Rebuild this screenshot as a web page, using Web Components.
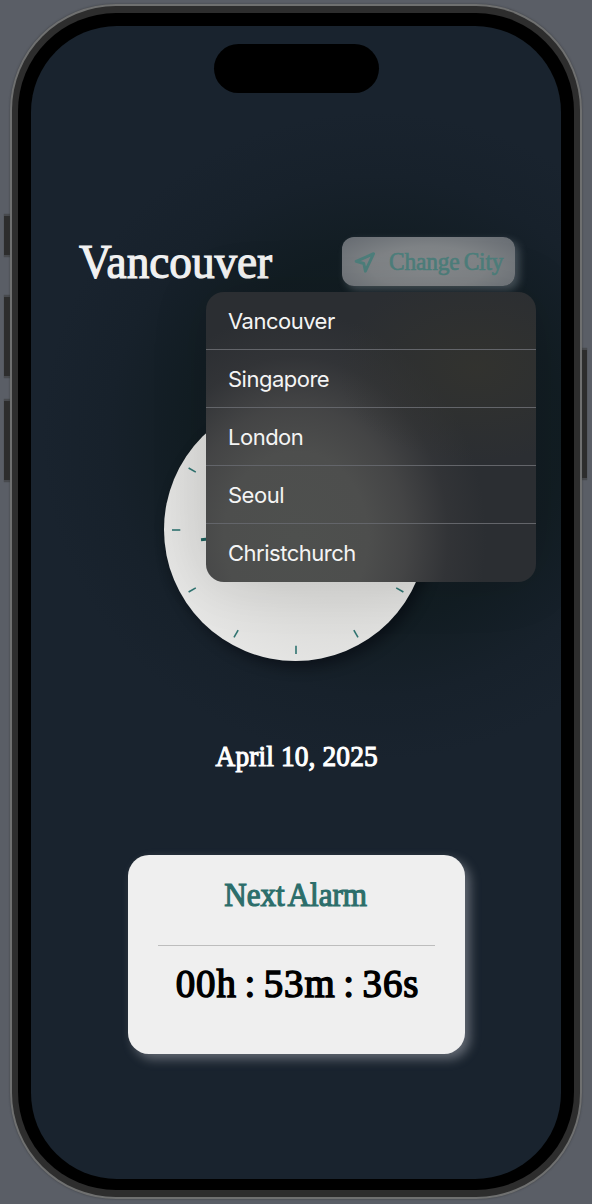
<!DOCTYPE html>
<html lang="en">
<head>
<meta charset="utf-8">
<title>World clock</title>
<style>
  html, body { margin: 0; height: 100%; overflow: hidden; background: #5a5e66; }
</style>
</head>
<body>
<phone-frame>
  <city-header slot="screen" city="Vancouver"></city-header>
  <clock-face slot="screen"></clock-face>
  <date-label slot="screen">April 10, 2025</date-label>
  <alarm-card slot="screen" heading="Next Alarm">00h : 53m : 36s</alarm-card>
</phone-frame>

<script>
const define = (name, html, setup) => customElements.define(name, class extends HTMLElement {
  constructor() {
    super();
    this.attachShadow({ mode: 'open' }).innerHTML = html;
  }
  connectedCallback() { if (setup) setup(this, this.shadowRoot); }
});

define('city-menu', `
<style>
  :host { display: block; box-sizing: border-box; width: 330px; height: 290px; border-radius: 18px; overflow: hidden;
    font: 400 22px/59px Inter, "Liberation Sans", sans-serif; letter-spacing: -.5px; color: #f4f4f4;
    background:
      radial-gradient(ellipse 140px 95px at 270px 75px, rgba(51,51,46,.85), rgba(51,51,46,0)),
      radial-gradient(ellipse 190px 225px at 90px 245px, #4e504e 0, #4d4e4d 38%, rgba(74,74,74,.8) 58%, rgba(60,60,62,.4) 80%, rgba(45,47,51,0) 100%),
      #2b2e32;
    box-shadow: 0 0 60px rgba(0,0,0,.1); }
  ::slotted(*) { display: block; height: 57px; padding-left: 22px; border-bottom: 1px solid #63656a; }
  ::slotted(:last-child) { border-bottom: 0; }
</style><slot></slot>`);

define('change-button', `
<style>
  :host { display: flex; align-items: center; box-sizing: border-box; width: 173px; height: 49px; padding-left: 12px; gap: 12px;
    border-radius: 12px; color: #4d7e7b;
    background: radial-gradient(ellipse 115px 42px at 50% 62%, #86898c 0, #7f8386 50%, #686d73 100%);
    box-shadow: 4px 4px 9px rgba(190,200,210,.3); }
  svg { display: block; flex: none; }
  span { font: 25.5px/49px "Liberation Serif", serif; letter-spacing: -.15px; word-spacing: -1.8px; white-space: nowrap; -webkit-text-stroke: .7px;
    transform: scaleX(.917); transform-origin: 0 50%; }
</style>
<svg width="23" height="24" viewBox="0 0 23 24" fill="none" stroke="currentColor" stroke-width="2.9" stroke-linejoin="round"><path d="M19.6 3.7 2.2 11.4 9.8 13.5 11.4 21.2Z"/></svg>
<span><slot></slot></span>`);

define('city-header', `
<style>
  :host { display: flex; justify-content: space-between; align-items: center; position: relative; z-index: 3; height: 49px; margin: 211px 46px 0 48px; }
  h1 { margin: 0; font: 400 48px/49px "Liberation Serif", serif; letter-spacing: -.05px; color: #f1f1f1; -webkit-text-stroke: 1.2px;
    transform: scaleX(.943); transform-origin: 0 50%; white-space: nowrap; }
  city-menu { position: absolute; top: 54.5px; right: -21px; }
</style>
<h1></h1>
<change-button>Change City</change-button>
<city-menu><span>Vancouver</span><span>Singapore</span><span>London</span><span>Seoul</span><span>Christchurch</span></city-menu>`,
(el, root) => { root.querySelector('h1').textContent = el.getAttribute('city'); });

define('clock-face', `
<style>
  :host { display: block; width: 263px; height: 263px; margin: 112px auto 0; border-radius: 50%; position: relative; left: -.5px;
    background: radial-gradient(circle at 66% 30%, #d6d6d4 0, #d9d9d7 48%, #ebebea 92%);
    box-shadow: 5px 6px 14px rgba(0,0,8,.45); }
  svg { display: block; }
</style>
<svg width="263" height="263" viewBox="-132 -132 263 263"><g class="ticks" stroke="#2f7370" stroke-width="1.6"></g><path d="M0 0-95 9.7" stroke="#1d5f5b" stroke-width="3"/></svg>`,
(el, root) => {
  root.querySelector('.ticks').innerHTML = Array.from({ length: 12 }, (_, i) =>
    `<path d="M0-115.7V-124" transform="rotate(${i * 30})"/>`).join('');
});

define('date-label', `
<style>
  :host { display: block; margin-top: 74.5px; text-align: center; color: #fff;
    font: 29px/40px "Liberation Serif", serif; letter-spacing: .15px; -webkit-text-stroke: 1.1px; transform: translateX(.7px) scaleX(.943); }
</style><slot></slot>`);

define('alarm-card', `
<style>
  :host { display: flex; flex-direction: column; align-items: center; box-sizing: border-box; width: 337px; height: 199px;
    margin: 79px auto 0; padding-top: 20px; border-radius: 21px; background: #efefef; font-family: "Liberation Serif", serif;
    box-shadow: 5px 5px 11px rgba(220,220,230,.38); }
  h2 { margin: 0; font: 400 33px/40px "Liberation Serif", serif; letter-spacing: -.05px; word-spacing: -3.2px; color: #2c6e6b; -webkit-text-stroke: 1.2px;
    transform: scaleX(.943); white-space: nowrap; }
  hr { width: 277px; height: 1px; margin: 30px 0 14px; border: 0; background: #bdbdbd; }
  div { font-size: 40px; line-height: 48px; letter-spacing: .9px; word-spacing: -3px; color: #000; -webkit-text-stroke: 1.5px; white-space: nowrap;
    transform: translateX(1.3px) scaleX(.972); }
</style>
<h2></h2><hr><div><slot></slot></div>`,
(el, root) => { root.querySelector('h2').textContent = el.getAttribute('heading'); });

define('phone-frame', `
<style>
  :host { display: block; position: relative; isolation: isolate; box-sizing: border-box; width: 572px; height: 1195px; margin: 4px 0 0 10px; }
  .rim { box-sizing: border-box; height: 100%; border-radius: 106px; padding: 2px; background: #6f7070; box-shadow: 0 0 2px rgba(50,52,56,.8); }
  .band { box-sizing: border-box; height: 100%; border-radius: 104px; padding: 7px 6px 7px 6px; background: #2d2d2d; }
  .bezel { box-sizing: border-box; height: 100%; border-radius: 98px; padding: 13px 13px 11px; background: #000; }
  .screen { display: flow-root; position: relative; height: 100%; overflow: hidden; border-radius: 86px;
    background: radial-gradient(ellipse 335px 325px at 345px 410px, rgba(15,27,31,.95) 0, rgba(17,28,33,.9) 55%, rgba(21,31,40,.5) 80%, rgba(25,35,46,0) 100%), #19232e; }
  .island { position: absolute; z-index: 4; left: 182.5px; top: 18px; width: 165.5px; height: 49px; border-radius: 25px; background: #000; }
  .key { position: absolute; z-index: -1; width: 7px; background: #2d2d2d; border: solid #484a4e; border-width: 2px 0; box-sizing: border-box; box-shadow: 0 0 1px #42454a; }
  .a { left: -6px; top: 210px; height: 43px; }
  .b { left: -6px; top: 291px; height: 83px; }
  .c { left: -6px; top: 395px; height: 83px; }
  .d { right: -5px; top: 344px; height: 132px; }
</style>
<i class="key a"></i><i class="key b"></i><i class="key c"></i><i class="key d"></i>
<div class="rim"><div class="band"><div class="bezel"><div class="screen"><div class="island"></div><slot name="screen"></slot></div></div></div></div>`);
</script>
</body>
</html>
